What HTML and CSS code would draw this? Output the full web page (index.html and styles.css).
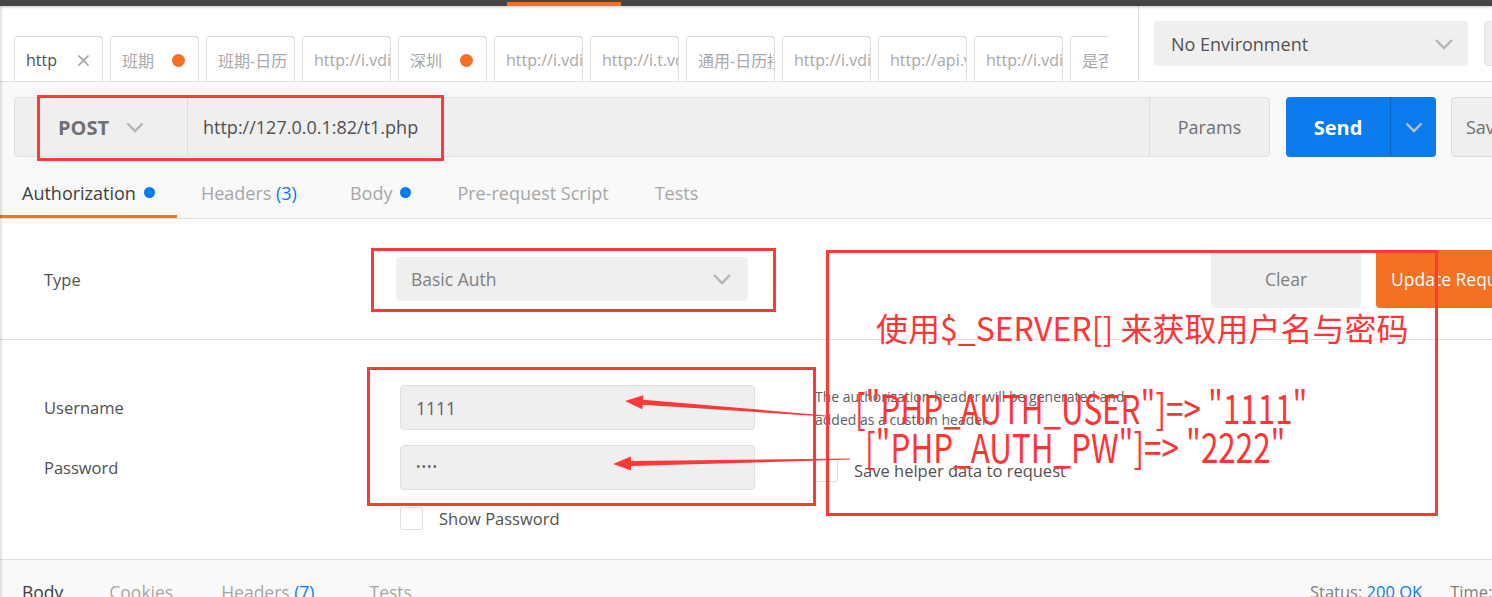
FILE: index.html
```html
<!DOCTYPE html>
<html lang="zh">
<head>
<meta charset="utf-8">
<title>Postman</title>
<link rel="stylesheet" href="styles.css">
</head>
<body>
<div class="app">
  <div class="topbar"><div class="topbar-active"></div></div>

  <div class="header">
    <div class="tabs-area">
      <div class="tabs">
        <div class="tab active"><span class="tab-label">http</span>
          <svg class="tab-close" width="13" height="13" viewBox="0 0 13 13"><path d="M1.5 1.5l10 10M11.5 1.5l-10 10" stroke="#9e9e9e" stroke-width="1.6" fill="none"/></svg>
        </div>
        <div class="tab"><span class="tab-label">班期</span><span class="tab-dot"></span></div>
        <div class="tab"><span class="tab-label">班期-日历</span></div>
        <div class="tab"><span class="tab-label">http://i.vdian.com</span></div>
        <div class="tab"><span class="tab-label">深圳</span><span class="tab-dot"></span></div>
        <div class="tab"><span class="tab-label">http://i.vdian.com</span></div>
        <div class="tab"><span class="tab-label">http://i.t.vdian.com</span></div>
        <div class="tab"><span class="tab-label">通用-日历接口</span></div>
        <div class="tab"><span class="tab-label">http://i.vdian.com</span></div>
        <div class="tab"><span class="tab-label">http://api.vdian.com</span></div>
        <div class="tab"><span class="tab-label">http://i.vdian.com</span></div>
        <div class="tab"><span class="tab-label">是否</span></div>
      </div>
    </div>
    <div class="env">
      <div class="env-select"><span>No Environment</span>
        <svg width="20" height="12" viewBox="0 0 20 12"><path d="M2 2l8 8 8-8" fill="none" stroke="#b4b4b4" stroke-width="2.4"/></svg>
      </div>
      <div class="env-btn"></div>
    </div>
  </div>

  <div class="request">
    <div class="url-row">
      <div class="url-group">
        <div class="method"><span>POST</span>
          <svg width="18" height="11" viewBox="0 0 18 11"><path d="M1.5 1.5l7.5 7.5 7.5-7.5" fill="none" stroke="#b4b4b4" stroke-width="2.4"/></svg>
        </div>
        <div class="url">http://127.0.0.1:82/t1.php</div>
        <div class="params">Params</div>
      </div>
      <div class="send">
        <span class="send-main">Send</span>
        <span class="send-arrow"><svg width="18" height="11" viewBox="0 0 18 11"><path d="M1.5 1.5l7.5 7.5 7.5-7.5" fill="none" stroke="#b9c2cc" stroke-width="2.4"/></svg></span>
      </div>
      <div class="save">Save</div>
    </div>
    <div class="req-tabs">
      <div class="rtab active">Authorization<span class="bdot"></span></div>
      <div class="rtab">Headers&nbsp;<span class="count">(3)</span></div>
      <div class="rtab">Body<span class="bdot"></span></div>
      <div class="rtab">Pre-request Script</div>
      <div class="rtab">Tests</div>
    </div>
  </div>

  <div class="auth">
    <div class="type-row">
      <div class="label">Type</div>
      <div class="select"><span>Basic Auth</span>
        <svg width="20" height="12" viewBox="0 0 20 12"><path d="M2 2l8 8 8-8" fill="none" stroke="#b4b4b4" stroke-width="2.4"/></svg>
      </div>
      <div class="type-actions">
        <div class="btn-clear">Clear</div>
        <div class="btn-update">Update Request</div>
      </div>
    </div>
    <div class="cred">
      <div class="cred-left">
        <div class="field-row">
          <div class="flabel">Username</div>
          <div class="input">1111</div>
        </div>
        <div class="field-row">
          <div class="flabel">Password</div>
          <div class="input pw">••••</div>
        </div>
        <div class="show-row">
          <span class="checkbox"></span><span>Show Password</span>
        </div>
      </div>
      <div class="cred-right">
        <p class="help">The authorization header will be generated and<br>added as a custom header</p>
        <div class="save-row"><span class="checkbox"></span><span>Save helper data to request</span></div>
      </div>
    </div>
  </div>

  <div class="response">
    <div class="resp-tabs">
      <div class="resp-tab active">Body</div>
      <div class="resp-tab">Cookies</div>
      <div class="resp-tab">Headers <span class="count">(7)</span></div>
      <div class="resp-tab">Tests</div>
    </div>
    <div class="resp-status">
      <span>Status: <span class="count">200 OK</span></span>
      <span>Time: 36 ms</span>
    </div>
  </div>

  <svg class="annot" width="1492" height="597" viewBox="0 0 1492 597">
    <g fill="none" stroke="#ff3838" stroke-width="3">
      <rect x="38.5" y="96.5" width="404" height="63"/>
      <rect x="372.5" y="249.5" width="402" height="61"/>
      <rect x="368.5" y="368.5" width="446" height="136"/>
      <rect x="827.5" y="251.5" width="609" height="263"/>
    </g>
    <g fill="#ff3838">
      <polygon points="826,415.4 643.1,399.8 643.4,395.3 625,401 642.4,409.3 642.7,404.8 826,416.6"/>
      <polygon points="850,458.4 631,461.1 630.9,456.6 613,464 631.1,470.6 631,466.1 850,459.6"/>
    </g>
  </svg>
  <div class="note note-1">使用$_SERVER[] 来获取用户名与密码</div>
  <div class="note note-2">["PHP_AUTH_USER"]=&gt; "1111"</div>
  <div class="note note-3">["PHP_AUTH_PW"]=&gt; "2222"</div>
</div>
</body>
</html>
```

FILE: styles.css
```css
* { box-sizing: border-box; margin: 0; padding: 0; }
html, body { width: 1492px; height: 597px; overflow: hidden; }
body {
  font-family: "Open Sans", "Noto Sans CJK SC", sans-serif;
  color: #505050;
  background: #fff;
}
.app { position: relative; width: 1492px; height: 597px; overflow: hidden; }
.app::before {
  content: ""; position: absolute; left: 0; top: 6px; bottom: 0; width: 3px;
  background: linear-gradient(to right, rgba(0,0,0,.14), rgba(0,0,0,0));
  z-index: 5;
}

/* top bar */
.topbar {
  height: 6px; background: #454545; display: flex; align-items: flex-end;
  position: relative; z-index: 2; box-shadow: 0 1px 3px rgba(0,0,0,.22);
}
.topbar-active { margin-left: 507px; width: 114px; height: 4px; background: #f47023; }

/* header with tabs */
.header { display: flex; height: 76px; border-bottom: 1px solid #e0e0e0; background: #fff; }
.tabs-area { width: 1139px; flex: none; border-right: 1px solid #e0e0e0; padding: 30px 0 0 14px; }
.tabs { display: flex; gap: 7px; width: 1094px; overflow: hidden; height: 45px; }
.tab {
  flex: none; width: 89px; height: 45px; display: flex; align-items: center;
  border: 1px solid #dcdcdc; border-bottom: none; border-radius: 4px 4px 0 0;
  padding: 2px 0 0 11px; font-size: 16px; color: #a8a8a8; white-space: nowrap; overflow: hidden;
  background: #fff;
}
.tab.active { color: #505050; }
.tab-label { flex: 1; min-width: 0; overflow: hidden; }
.tab-dot { flex: none; width: 13px; height: 13px; border-radius: 50%; background: #f47023; margin-right: 13px; }
.tab-close { flex: none; margin-right: 12px; }

.env { display: flex; gap: 16px; padding: 15px 0 0 15px; }
.env-select {
  flex: none; width: 314px; height: 45px; background: #efefef; border-radius: 4px;
  display: flex; align-items: center; justify-content: space-between;
  padding: 0 14px 0 17px; font-size: 18px; color: #505050;
}
.env-btn { flex: none; width: 60px; height: 45px; background: #efefef; border: 1px solid #e4e4e4; border-radius: 4px; }

/* request */
.request { background: #f9f9f9; padding-top: 15px; border-bottom: 1px solid #e0e0e0; }
.url-row { display: flex; height: 60px; padding-left: 14px; }
.url-group {
  flex: none; width: 1256px; display: flex; background: #efefef;
  border: 1px solid #e0e0e0; border-radius: 4px;
}
.method {
  flex: none; width: 173px; display: flex; align-items: center; justify-content: center; gap: 17px;
  font-weight: 700; font-size: 20px; color: #707070; border-right: 1px solid #dcdcdc;
}
.url { flex: 1; display: flex; align-items: center; padding-left: 15px; font-size: 18px; color: #505050; }
.params {
  flex: none; width: 120px; display: flex; align-items: center; justify-content: center;
  border-left: 1px solid #dcdcdc; font-size: 18px; color: #707070;
}
.send {
  flex: none; margin-left: 16px; width: 150px; display: flex; background: #097bed; border-radius: 4px;
}
.send-main {
  width: 104px; display: flex; align-items: center; justify-content: center;
  color: #fff; font-weight: 700; font-size: 20px;
}
.send-arrow { flex: 1; display: flex; align-items: center; justify-content: center; border-left: 1px solid #0866c6; }
.save {
  flex: none; margin-left: 15px; width: 120px; display: flex; align-items: center; padding-left: 14px;
  background: #efefef; border: 1px solid #dcdcdc; border-radius: 4px; font-size: 18px; color: #707070;
}

.req-tabs { display: flex; height: 48px; margin-top: 13px; }
.rtab {
  display: flex; align-items: center; padding: 0 23px; font-size: 18px; color: #a6a6a6;
  border-bottom: 3px solid transparent; white-space: nowrap;
}
.rtab:first-child { padding-left: 22px; padding-right: 22px; }
.rtab:nth-child(2) { padding-left: 24px; padding-right: 30px; }
.rtab.active { color: #404040; border-bottom-color: #f47023; }
.bdot { width: 11px; height: 11px; border-radius: 50%; background: #097bed; margin-left: 8px; }
.count { color: #097bed; }

/* auth */
.auth { background: #fff; border-bottom: 1px solid #e0e0e0; }
.type-row {
  display: flex; align-items: center; height: 121px; padding-left: 44px;
  border-bottom: 1px solid #e0e0e0;
}
.label { flex: none; width: 352px; font-size: 16.5px; color: #505050; }
.select {
  flex: none; width: 352px; height: 44px; background: #efefef; border-radius: 4px;
  display: flex; align-items: center; justify-content: space-between; padding: 0 16px 0 15px;
  font-size: 17.5px; color: #808080;
}
.type-actions { flex: none; display: flex; gap: 15px; margin-left: 463px; }
.btn-clear {
  width: 150px; height: 58px; background: #efefef; border-radius: 4px; color: #808080;
  font-size: 17.5px; display: flex; align-items: center; justify-content: center;
}
.btn-update {
  height: 58px; padding: 0 15px; background: #f47023; color: #fff; border-radius: 4px;
  font-size: 17.5px; display: flex; align-items: center; white-space: nowrap;
}

.cred { display: flex; height: 219px; padding: 45px 0 0 44px; }
.cred-left { flex: none; width: 711px; display: flex; flex-direction: column; gap: 15px; }
.field-row { display: flex; align-items: center; height: 45px; }
.flabel { flex: none; width: 356px; font-size: 16.5px; color: #505050; }
.input {
  flex: none; width: 355px; height: 45px; background: #efefef; border: 1px solid #e0e0e0; border-radius: 4px;
  display: flex; align-items: center; padding-left: 15px; font-size: 17.5px; color: #606060;
}
.input.pw { font-size: 12px; letter-spacing: 1px; padding-bottom: 2px; }
.show-row { display: flex; align-items: center; gap: 16px; margin: 2px 0 0 356px; font-size: 16.5px; color: #505050; }
.checkbox { flex: none; width: 23px; height: 23px; border: 1px solid #dedede; border-radius: 2px; background: #fff; }

.cred-right { margin-left: 60px; }
.help { font-size: 14px; line-height: 23px; color: #606060; }
.save-row { display: flex; align-items: center; gap: 16px; margin-top: 28px; font-size: 16.5px; color: #505050; }

/* response */
.response { display: flex; height: 37px; padding-top: 20px; background: #f9f9f9; }
.resp-tabs { flex: none; width: 1310px; display: flex; }
.resp-tab { padding: 0 23px; font-size: 17.5px; line-height: 24px; color: #a6a6a6; white-space: nowrap; }
.resp-tab:first-child { padding-left: 22px; }
.resp-tab:nth-child(3) { padding-left: 25px; padding-right: 32px; }
.resp-tab.active { color: #404040; }
.resp-status { flex: none; display: flex; gap: 28px; font-size: 16.5px; line-height: 24px; color: #808080; white-space: nowrap; }

/* annotations (overlay) */
.annot { position: absolute; left: 0; top: 0; z-index: 10; pointer-events: none; }
.note {
  position: absolute; z-index: 11; color: #ff3535; white-space: nowrap; line-height: 1;
  font-family: "Noto Sans CJK SC", sans-serif;
}
.note-1 { left: 876px; top: 311px; font-size: 32px; }
.note-2 { left: 855px; top: 387px; font-size: 40px; transform: scaleX(0.785); transform-origin: 0 0; }
.note-3 { left: 865px; top: 426px; font-size: 40px; transform: scaleX(0.785); transform-origin: 0 0; }
```
